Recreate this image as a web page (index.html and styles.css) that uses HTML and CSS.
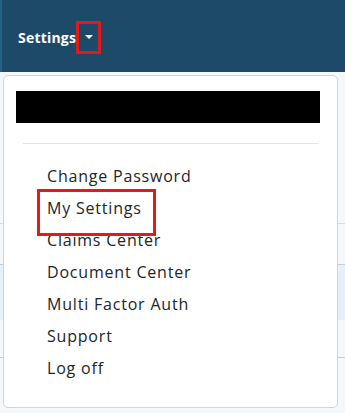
FILE: index.html
```html
<!DOCTYPE html>
<html>
<head>
<meta charset="utf-8">
<link rel="stylesheet" href="styles.css">
</head>
<body>
<header class="topbar">
  <div class="nav-item">
    <span class="nav-label">Settings</span>
    <span class="caret-wrap"><span class="caret"></span></span>
  </div>
</header>
<main class="content">
  <div class="row row-a"></div>
  <div class="row row-b"></div>
  <div class="row row-c"></div>
  <div class="row row-d"></div>
</main>
<div class="dropdown">
  <div class="redacted"></div>
  <hr class="divider">
  <ul class="menu">
    <li>Change Password</li>
    <li class="marked">My Settings</li>
    <li>Claims Center</li>
    <li>Document Center</li>
    <li>Multi Factor Auth</li>
    <li>Support</li>
    <li>Log off</li>
  </ul>
</div>
</body>
</html>
```
FILE: styles.css
```css
* { box-sizing: border-box; }
html, body { margin: 0; padding: 0; }
body {
  width: 345px;
  height: 413px;
  overflow: hidden;
  background: #f4f8fb;
  font-family: "Open Sans", "Noto Sans", sans-serif;
  position: relative;
}
.topbar {
  height: 72px;
  background: #1e4a6a;
  border-left: 2px solid #23618b;
  display: flex;
  align-items: center;
  padding-left: 16px;
}
.nav-item {
  display: flex;
  align-items: center;
  color: #fff;
  font-weight: 700;
  font-size: 14px;
  margin-top: 2px;
}
.nav-label { letter-spacing: 0.2px; }
.caret-wrap {
  position: relative;
  width: 25px;
  height: 33px;
  margin-left: 0;
  border: 3px solid #e01b1b;
  display: flex;
  align-items: center;
  justify-content: center;
}
.caret {
  width: 0; height: 0;
  border-left: 4px solid transparent;
  border-right: 4px solid transparent;
  border-top: 4px solid #fff;
  margin-top: 0;
}
.content {
  display: flex;
  flex-direction: column;
}
.row-a { height: 152px; border-bottom: 1px solid #d5dbe1; }
.row-b { height: 41px; border-bottom: 1px solid #c6ccd2; }
.row-c { height: 55px; background: #e4f0fa; }
.row-d { height: 38px; border-bottom: 1px solid #c6ccd2; }
.dropdown {
  position: absolute;
  left: 3px;
  top: 75px;
  width: 335px;
  height: 333px;
  background: #fff;
  border: 1px solid #d0d5da;
  border-radius: 5px;
  padding: 15px 0 0 12px;
}
.redacted {
  width: 304px;
  height: 32px;
  background: #000;
}
.divider {
  margin: 20px 0 0 7px;
  width: 295px;
  border: 0;
  border-top: 1px solid #e1e4e8;
}
.menu {
  list-style: none;
  margin: 16px 0 0;
  padding: 0 0 0 31px;
}
.menu li {
  height: 32px;
  line-height: 32px;
  font-size: 16px;
  color: #212529;
  letter-spacing: 0.8px;
}
.menu li.marked { position: relative; }
.marked::after {
  content: "";
  position: absolute;
  left: -10px;
  top: -3px;
  width: 113px;
  height: 41px;
  border: 3px solid #e01b1b;
}
```
